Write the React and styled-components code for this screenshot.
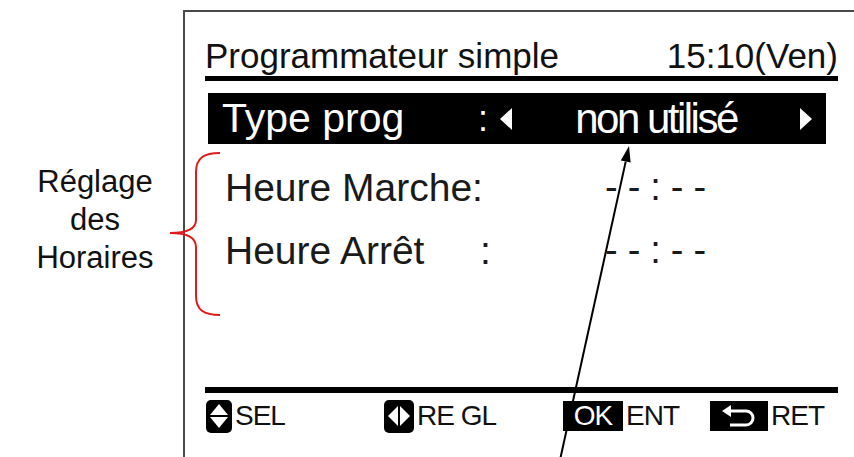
import React from 'react';
import styled, { createGlobalStyle } from 'styled-components';

const GlobalStyle = createGlobalStyle`
  html, body {
    margin: 0;
    padding: 0;
    background: #fff;
  }
  body {
    font-family: "Liberation Sans", Arial, sans-serif;
    color: #111;
  }
`;

const Page = styled.div`
  position: relative;
  width: 854px;
  height: 457px;
  overflow: hidden;
  display: flex;
  background: #fff;
`;

const Legend = styled.div`
  flex: none;
  width: 176px;
  padding: 163px 0 0 7px;
  text-align: center;
  font-size: 31px;
  line-height: 38px;
  color: #111;
`;

const Frame = styled.div`
  flex: none;
  width: 720px;
  margin-top: 10px;
  border-left: 2px solid #4a4a4a;
  border-top: 2px solid #4a4a4a;
  padding-left: 20px;
  display: flex;
  flex-direction: column;
`;

const Screen = styled.div`
  width: 633px;
  display: flex;
  flex-direction: column;
`;

const TitleRow = styled.div`
  margin-top: 23px;
  height: 41px;
  display: flex;
  justify-content: space-between;
  align-items: center;
  font-size: 35px;
  line-height: 41px;
  border-bottom: 5px solid #000;
`;

const SelectBar = styled.div`
  margin: 12px 0 0 3px;
  width: 618px;
  height: 51px;
  background: #000;
  color: #fff;
  display: flex;
  align-items: center;
  padding: 0 14px;
  box-sizing: border-box;
  font-size: 41px;
  line-height: 51px;
`;

const BarLabel = styled.span`
  width: 256px;
  flex: none;
`;

const BarColon = styled.span`
  font-size: 36px;
  width: 22px;
  flex: none;
`;

const Tri = styled.span`
  flex: none;
  width: 0;
  height: 0;
  border-top: 11px solid transparent;
  border-bottom: 11px solid transparent;
  ${(p) => (p.$dir === 'left'
    ? 'border-right: 12px solid #fff;'
    : 'border-left: 12px solid #fff;')}
`;

const BarValue = styled.span`
  flex: 1;
  text-align: center;
  font-size: 42px;
  letter-spacing: -2.5px;
`;

const Rows = styled.div`
  padding-top: 12px;
`;

const Row = styled.div`
  display: grid;
  grid-template-columns: 255px 125px auto;
  padding-left: 20px;
  height: 63px;
  line-height: 63px;
  font-size: 39px;
  white-space: nowrap;
  color: #1a1a1a;
`;

const Dashes = styled.span`
  font-size: 38px;
  letter-spacing: 10px;
`;

const BottomRule = styled.div`
  margin-top: 105px;
  height: 6px;
  background: #000;
`;

const Footer = styled.div`
  display: grid;
  grid-template-columns: 178px 179px 147px auto;
  align-items: center;
  height: 46px;
  padding-left: 1px;
`;

const Key = styled.div`
  display: flex;
  align-items: center;
  gap: 3px;
  font-size: 28px;
  letter-spacing: -1px;
`;

const KeyIcon = styled.span`
  display: inline-flex;
  flex: none;
  align-items: center;
  justify-content: center;
  width: ${(p) => p.$w}px;
  height: ${(p) => (p.$round ? 33 : 30)}px;
  background: #000;
  border-radius: ${(p) => (p.$round ? 5 : 0)}px;
  color: #fff;
  font-size: 28px;
  letter-spacing: -1px;
`;

const Overlay = styled.svg`
  position: absolute;
  left: 0;
  top: 0;
  pointer-events: none;
`;

const UpDown = () => (
  <svg width="20" height="26" viewBox="0 0 20 26">
    <polygon points="10,1 19,12 1,12" fill="#fff" />
    <polygon points="1,14 19,14 10,25" fill="#fff" />
  </svg>
);

const LeftRight = () => (
  <svg width="24" height="24" viewBox="0 0 24 24">
    <polygon points="1,12 11,2 11,22" fill="#fff" />
    <polygon points="13,2 23,12 13,22" fill="#fff" />
  </svg>
);

const Return = () => (
  <svg width="38" height="26" viewBox="0 0 38 26">
    <path d="M9 8 H26 A7 7 0 0 1 26 22 H10" fill="none" stroke="#fff" strokeWidth="3" />
    <polygon points="2,8 11,2 11,14" fill="#fff" />
  </svg>
);

export default function App() {
  return (
    <>
      <GlobalStyle />
      <Page>
        <Legend>
          Réglage
          <br />
          des
          <br />
          Horaires
        </Legend>
        <Frame>
          <Screen>
            <TitleRow>
              <span>Programmateur simple</span>
              <span>15:10(Ven)</span>
            </TitleRow>
            <SelectBar>
              <BarLabel>Type prog</BarLabel>
              <BarColon>:</BarColon>
              <Tri $dir="left" />
              <BarValue>non utilisé</BarValue>
              <Tri $dir="right" />
            </SelectBar>
            <Rows>
              <Row>
                <span>Heure Marche:</span>
                <span />
                <Dashes>--:--</Dashes>
              </Row>
              <Row>
                <span>Heure Arrêt</span>
                <span>:</span>
                <Dashes>--:--</Dashes>
              </Row>
            </Rows>
            <BottomRule />
            <Footer>
              <Key>
                <KeyIcon $w={26} $round>
                  <UpDown />
                </KeyIcon>
                SEL
              </Key>
              <Key>
                <KeyIcon $w={30} $round>
                  <LeftRight />
                </KeyIcon>
                RE GL
              </Key>
              <Key>
                <KeyIcon $w={60}>OK</KeyIcon>
                ENT
              </Key>
              <Key>
                <KeyIcon $w={58}>
                  <Return />
                </KeyIcon>
                RET
              </Key>
            </Footer>
          </Screen>
        </Frame>
        <Overlay width="854" height="457" viewBox="0 0 854 457">
          <path
            d="M220 153 C204 153 196 158 196 172 V220 C196 230 186 233 170 233 C186 233 196 237 196 247 V296 C196 310 204 315 220 315"
            fill="none"
            stroke="#e01b1b"
            strokeWidth="2"
          />
          <line x1="560" y1="460" x2="625.7" y2="161.6" stroke="#000" strokeWidth="2" />
          <polygon points="629,146 630.6,162.6 620.8,160.6" fill="#000" />
        </Overlay>
      </Page>
    </>
  );
}
